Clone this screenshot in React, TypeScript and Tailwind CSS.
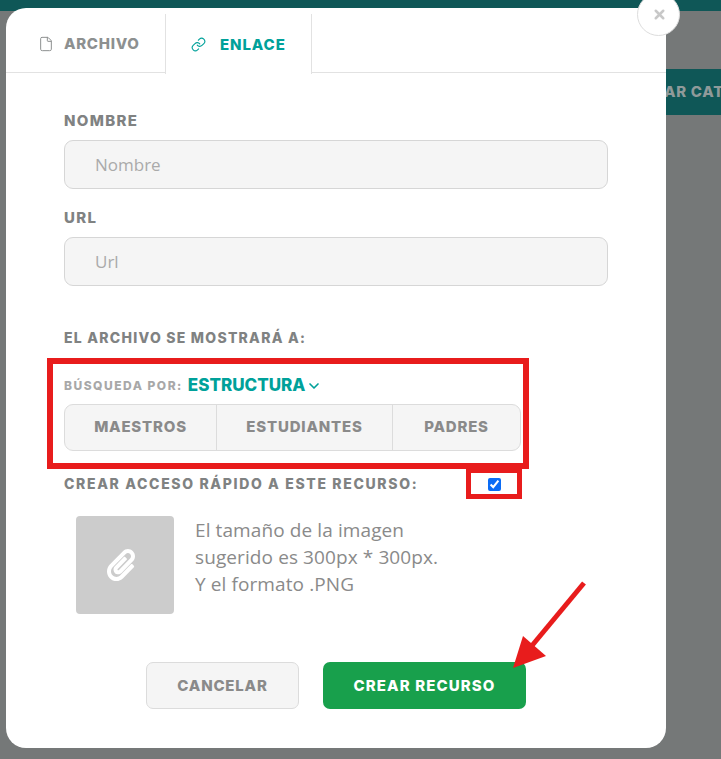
import { File, Link, ChevronDown, X } from 'lucide-react';
import { FaPaperclip } from 'react-icons/fa';

const heading = "font-['Inter','Liberation_Sans',sans-serif] font-extrabold";
const body = "font-['Open_Sans','Liberation_Sans',sans-serif]";

function Field({ label, placeholder }: { label: string; placeholder: string }) {
  return (
    <div>
      <p className={`${heading} mb-[10px] text-[15px] leading-[18px] tracking-[1.3px] text-[#808282]`}>{label}</p>
      <input
        placeholder={placeholder}
        className={`${body} block h-[49px] w-full rounded-[9px] border border-[#d6d6d6] bg-[#f5f5f5] pl-[30px] text-[17px] outline-none placeholder:text-[#aaaaaa]`}
      />
    </div>
  );
}

export default function App() {
  return (
    <div className="relative h-[759px] w-[721px] overflow-hidden bg-[#757878]">
      {/* Page behind the modal */}
      <div className="h-[11px] bg-[#0f5757]" />
      <div className="flex justify-end pt-[58px]">
        <div className={`${heading} flex h-[46px] w-[300px] items-center overflow-hidden bg-[#0f5757] pl-[243px] text-[15px] tracking-[0.7px] whitespace-nowrap text-[#8f9a9a]`}>
          AR CATEGORÍA
        </div>
      </div>

      {/* Modal */}
      <div className="absolute top-[8px] left-[6px] flex h-[740px] w-[660px] flex-col rounded-[20px] bg-white">
        <div className="flex h-[65px] border-b border-[#e2e2e2]">
          <div className="mt-[6px] flex h-[59px] w-[159px] items-center pl-[32px]">
            <File className="h-[16px] w-[16px] text-[#8d9090]" strokeWidth={1.5} />
            <span className={`${heading} mt-[2px] ml-[10px] text-[15px] tracking-[0.7px] text-[#8d9090]`}>ARCHIVO</span>
          </div>
          <div className="relative mt-[6px] -mb-px flex h-[60px] w-[147px] items-center border-x border-[#e2e2e2] bg-white pl-[25px]">
            <Link className="h-[15px] w-[15px] text-[#00a19a]" strokeWidth={1.75} />
            <span className={`${heading} mt-[2px] ml-[14px] text-[15px] tracking-[0.9px] text-[#00a19a]`}>ENLACE</span>
          </div>
        </div>

        <div className="flex flex-1 flex-col px-[58px]">
          <div className="mt-[39px] flex flex-col gap-[20px]">
            <Field label="NOMBRE" placeholder="Nombre" />
            <Field label="URL" placeholder="Url" />
          </div>

          <p className={`${heading} mt-[43px] text-[14px] leading-[18px] tracking-[1.25px] text-[#808282]`}>EL ARCHIVO SE MOSTRARÁ A:</p>

          <div className="mt-[27px] flex h-[24px] items-center">
            <span className={`${heading} text-[12px] tracking-[1.5px] text-[#a8a8a8]`}>BÚSQUEDA POR:</span>
            <span className={`${heading} ml-[5px] text-[17px] tracking-[0px] text-[#00a19a]`}>ESTRUCTURA</span>
            <ChevronDown className="ml-[1px] h-[16px] w-[16px] text-[#00a19a]" strokeWidth={2.5} />
          </div>

          <div className={`${heading} mt-[6px] flex h-[47px] w-[457px] rounded-[9px] border border-[#dcdcdc] bg-[#f5f5f5] text-[15px] tracking-[0.8px] text-[#8a8a8a]`}>
            <div className="flex w-[152px] items-center justify-center border-r border-[#dcdcdc]">MAESTROS</div>
            <div className="flex w-[176px] items-center justify-center border-r border-[#dcdcdc]">ESTUDIANTES</div>
            <div className="flex flex-1 items-center justify-center">PADRES</div>
          </div>

          <div className="mt-[22px] flex h-[20px] items-center">
            <span className={`${heading} text-[14px] tracking-[1.65px] text-[#808282]`}>CREAR ACCESO RÁPIDO A ESTE RECURSO:</span>
            <input type="checkbox" defaultChecked className="absolute top-[470px] left-[482px] h-[13px] w-[13px] accent-[#0b6cf5]" />
          </div>

          <div className="mt-[23px] ml-[12px] flex gap-[21px]">
            <div className="flex h-[98px] w-[98px] items-center justify-center rounded-[4px] bg-[#cccccc] pr-[8px]">
              <FaPaperclip className="h-[32px] w-[32px] text-white" />
            </div>
            <p className={`${body} pt-[1px] text-[19px] leading-[27px] tracking-[0.1px] text-[#8a8a8a]`}>
              El tamaño de la imagen
              <br />
              sugerido es 300px * 300px.
              <br />Y el formato .PNG
            </p>
          </div>

          <div className="mt-[48px] ml-[82px] flex gap-[24px]">
            <button className={`${heading} h-[47px] w-[153px] rounded-[7px] border border-[#dcdcdc] bg-[#f5f5f5] pt-[1px] text-[15px] tracking-[0.8px] text-[#8a8a8a]`}>CANCELAR</button>
            <button className={`${heading} h-[47px] w-[203px] rounded-[7px] bg-[#18a04c] pt-[1px] text-[15px] tracking-[1.1px] text-white`}>CREAR RECURSO</button>
          </div>
        </div>
      </div>

      {/* Close button */}
      <div className="absolute top-[-7px] left-[637px] flex h-[43px] w-[43px] items-center justify-center rounded-full border border-[#dddddd] bg-white pl-[1px]">
        <X className="h-[15px] w-[15px] text-[#c8c8c8]" strokeWidth={4} />
      </div>

      {/* Red annotations */}
      <div className="pointer-events-none absolute top-[358px] left-[47px] h-[111px] w-[482px] border-[6px] border-[#e81c1c]" />
      <div className="pointer-events-none absolute top-[468px] left-[466px] h-[31px] w-[56px] border-[5px] border-[#e81c1c]" />
      <svg className="pointer-events-none absolute top-0 left-0" width="721" height="759" viewBox="0 0 721 759">
        <line x1="584" y1="583" x2="530" y2="648" stroke="#e81c1c" strokeWidth="5" />
        <polygon points="513,668 523,636 546,656" fill="#e81c1c" />
      </svg>
    </div>
  );
}
